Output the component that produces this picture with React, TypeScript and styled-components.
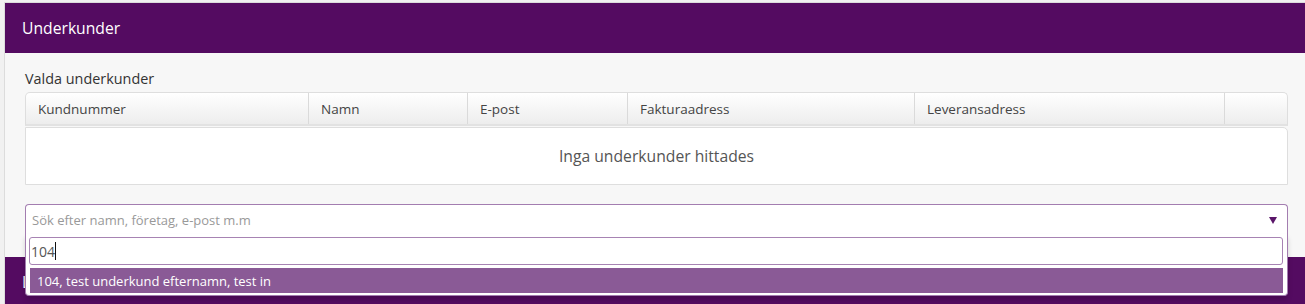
import { FunctionComponent } from "react";
import styled, { createGlobalStyle } from "styled-components";

const GlobalStyle = createGlobalStyle`
  html, body {
    margin: 0;
    padding: 0;
    background: #f1f1f1;
    font-family: "Open Sans", "Liberation Sans", sans-serif;
    overflow: hidden;
  }
`;

interface Column {
  title: string;
  width: number;
}

const columns: Column[] = [
  { title: "Kundnummer", width: 283 },
  { title: "Namn", width: 159 },
  { title: "E-post", width: 160 },
  { title: "Fakturaadress", width: 287 },
  { title: "Leveransadress", width: 310 },
  { title: "", width: 64 },
];

const App: FunctionComponent = () => (
  <Page>
    <GlobalStyle />
    <Panel>
      <PanelHeader>Underkunder</PanelHeader>
      <PanelBody>
        <SectionLabel>Valda underkunder</SectionLabel>
        <TableHead>
          {columns.map((c, i) => (
            <HeadCell key={i} $width={c.width} $last={i === columns.length - 1}>
              {c.title}
            </HeadCell>
          ))}
        </TableHead>
        <TableBody>Inga underkunder hittades</TableBody>

        <Select>
          <SelectControl>
            <Placeholder>Sök efter namn, företag, e-post m.m</Placeholder>
            <Arrow />
          </SelectControl>
          <Drop>
            <SearchBox>
              104
              <Caret />
            </SearchBox>
            <Results>
              <Result $active>104, test underkund efternamn, test in</Result>
            </Results>
          </Drop>
        </Select>
      </PanelBody>
    </Panel>
    <Panel>
      <PanelHeader>Leveransadresser</PanelHeader>
    </Panel>
  </Page>
);

export default App;

const Page = styled.div`
  padding: 2px 0 0 4px;
  height: 304px;
  box-sizing: border-box;
`;

const Panel = styled.section`
  border: 1px solid #dcdcdc;
  border-right: 0;
  border-bottom: 0;
  background: #f7f7f7;
  & + & {
    border-top: 0;
  }
`;

const PanelHeader = styled.h2`
  margin: 0;
  height: 50px;
  display: flex;
  align-items: center;
  padding: 0 17px;
  background: #540b61;
  color: #fff;
  font-size: 15.7px;
  font-weight: 400;
`;

const PanelBody = styled.div`
  padding: 16px 17px 23px 20px;
`;

const SectionLabel = styled.div`
  font-size: 14.4px;
  line-height: 20px;
  color: #333;
  margin-bottom: 3px;
`;

const TableHead = styled.div`
  display: flex;
  height: 34px;
  border: 1px solid #dedede;
  border-bottom: 2px solid #e2e2e2;
  border-radius: 5px 5px 0 0;
  background: linear-gradient(#ffffff, #ededed);
  box-sizing: border-box;
`;

const HeadCell = styled.div<{ $width: number; $last?: boolean }>`
  flex: ${({ $last }) => ($last ? "1 1 auto" : "0 0 auto")};
  width: ${({ $width }) => $width}px;
  box-sizing: border-box;
  padding: 0 12px;
  display: flex;
  align-items: center;
  font-size: 13.5px;
  color: #444;
  border-right: ${({ $last }) => ($last ? "0" : "1px solid #dadada")};
`;

const TableBody = styled.div`
  height: 58px;
  margin-top: 1px;
  border: 1px solid #dedede;
  border-radius: 0 5px 0 0;
  background: #fff;
  box-sizing: border-box;
  display: flex;
  align-items: center;
  justify-content: center;
  font-size: 15.7px;
  color: #555;
`;

const Select = styled.div`
  position: relative;
  margin-top: 19px;
`;

const SelectControl = styled.div`
  height: 30px;
  box-sizing: border-box;
  border: 1px solid #a37db0;
  border-bottom: 0;
  border-radius: 4px 4px 0 0;
  background: #fff;
  display: flex;
  align-items: center;
  justify-content: space-between;
  padding: 0 10px 0 6px;
`;

const Placeholder = styled.span`
  font-size: 13px;
  color: #999;
`;

const Arrow = styled.span`
  width: 0;
  height: 0;
  border-left: 4px solid transparent;
  border-right: 4px solid transparent;
  border-top: 7px solid #5a1569;
  margin-top: 1px;
`;

const Drop = styled.div`
  position: absolute;
  top: 100%;
  left: 0;
  right: 0;
  z-index: 10;
  background: #fff;
  border: 1px solid #a37db0;
  border-top: 0;
  border-radius: 0 0 4px 4px;
  box-shadow: 0 4px 5px rgba(0, 0, 0, 0.15);
  padding: 3px 4px 2px 3px;
`;

const SearchBox = styled.div`
  height: 28px;
  box-sizing: border-box;
  border: 1px solid #a783b3;
  border-radius: 3px;
  padding: 0 1px;
  display: flex;
  align-items: center;
  font-size: 14px;
  color: #555;
`;

const Caret = styled.span`
  display: inline-block;
  width: 1px;
  height: 18px;
  background: #111;
`;

const Results = styled.ul`
  list-style: none;
  margin: 3px 0 0 1px;
  padding: 0;
`;

const Result = styled.li<{ $active?: boolean }>`
  height: 25px;
  display: flex;
  align-items: center;
  padding: 0 7px;
  font-size: 13px;
  color: ${({ $active }) => ($active ? "#fff" : "#444")};
  background: ${({ $active }) => ($active ? "#8a5a96" : "transparent")};
`;
